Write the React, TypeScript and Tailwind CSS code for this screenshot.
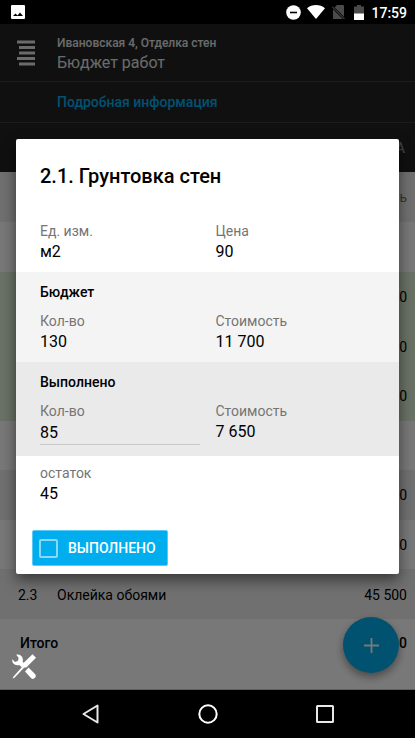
import React from 'react';

type Row = { code?: string; name?: string; total?: string; tone: string };

const rows: Row[] = [
  { tone: 'bg-white' },
  { total: '0', tone: 'bg-[#e1f0d6]' },
  { total: '0', tone: 'bg-[#e1f0d6]' },
  { total: '0', tone: 'bg-[#e1f0d6]' },
  { tone: 'bg-white' },
  { total: '0', tone: 'bg-[#efefef]' },
  { total: '0', tone: 'bg-white' },
  { code: '2.3', name: 'Оклейка обоями', total: '45 500', tone: 'bg-[#efefef]' },
];

const StatusBar = () => (
  <div className="flex h-6 items-center justify-between bg-black pl-[11px] pr-2 text-white">
    <svg className="h-[14px] w-[14px]" viewBox="0 0 14 14">
      <rect width="14" height="14" rx="1" fill="#fff" />
      <path d="M2 11 4.500 8.500 6.500 10.500 9 7.500 12 11Z" fill="#000" />
    </svg>
    <div className="flex items-center">
      <svg className="h-[15px] w-[15px]" viewBox="0 0 15 15">
        <circle cx="7.5" cy="7.5" r="7.3" fill="#fff" />
        <rect x="4" y="6.7" width="7" height="1.6" fill="#000" />
      </svg>
      <svg className="ml-1.5 h-[14px] w-[18px]" viewBox="0 0 18 14">
        <path d="M0 3.2C2.6 1.1 5.7 0 9 0s6.400 1.100 9 3.200L9 14Z" fill="#fff" />
      </svg>
      <svg className="ml-[7px] h-[14px] w-[13px]" viewBox="0 0 13 14">
        <path d="M5 0h6a1 1 0 0 1 1 1v13H1V4Z" fill="#4a4a4a" />
        <path d="M0 1.500 12.500 14" stroke="#000" strokeWidth="2.400" />
        <path d="M0 1.500 12.500 14" stroke="#5c5c5c" strokeWidth="1" />
      </svg>
      <svg className="ml-[9px] h-[15px] w-[10px]" viewBox="0 0 10 15">
        <path d="M3 0h4v1.500h3V15H0V1.500h3Z" fill="#4a4a4a" />
        <rect y="8.500" width="10" height="6.500" fill="#fff" />
      </svg>
      <span className="ml-[7px] pt-px text-sm leading-5 font-medium">17:59</span>
    </div>
  </div>
);

const Field = ({ label, value }: { label: string; value: string }) => (
  <div>
    <div className="text-sm leading-5 text-[#757575]">{label}</div>
    <div className="text-base leading-[22px]">{value}</div>
  </div>
);

const TaskDialog = () => (
  <div
    role="dialog"
    aria-labelledby="task-title"
    className="w-full rounded-xs bg-white text-black shadow-[0_6px_14px_rgba(0,0,0,0.5)]"
  >
    <h2 id="task-title" className="px-6 pt-6 text-xl leading-[26px] font-medium">
      2.1. Грунтовка стен
    </h2>

    <div className="grid grid-cols-2 gap-4 px-6 pt-8 pb-[9px]">
      <Field label="Ед. изм." value="м2" />
      <Field label="Цена" value="90" />
    </div>

    <section className="bg-[#f4f4f4] px-6 pt-[10px] pb-[9px]">
      <h3 className="text-sm leading-5 font-medium">Бюджет</h3>
      <div className="mt-[9px] grid grid-cols-2 gap-4">
        <Field label="Кол-во" value="130" />
        <Field label="Стоимость" value="11 700" />
      </div>
    </section>

    <section className="bg-[#eaeaea] px-6 pt-[10px] pb-[11px]">
      <h3 className="text-sm leading-5 font-medium">Выполнено</h3>
      <div className="mt-[9px] grid grid-cols-2 gap-4">
        <div>
          <label htmlFor="done-qty" className="block text-sm leading-5 text-[#757575]">
            Кол-во
          </label>
          <input
            id="done-qty"
            type="text"
            defaultValue="85"
            className="block h-6 w-full border-b border-[#c8c8c8] bg-transparent pb-px text-base leading-[22px] outline-none"
          />
        </div>
        <Field label="Стоимость" value="7 650" />
      </div>
    </section>

    <div className="grid grid-cols-2 gap-4 px-6 pt-[7px]">
      <Field label="остаток" value="45" />
    </div>

    <div className="flex px-4 pt-[25px] pb-2">
      <label className="inline-flex h-9 items-center rounded-xs border border-[#5cc9f5] bg-[#00aeef] pr-[11px] pl-1.5 text-white">
        <input
          type="checkbox"
          className="h-[19px] w-[19px] appearance-none rounded-xs border-2 border-[#8ad8f8] checked:bg-white"
        />
        <span className="ml-[10px] text-sm leading-5 font-medium">ВЫПОЛНЕНО</span>
      </label>
    </div>
  </div>
);

const App = () => {
  return (
    <div className="flex min-h-screen flex-col bg-black font-[Roboto,sans-serif]">
      <StatusBar />

      <div className="relative flex flex-1 flex-col bg-white">
        <header className="bg-[#222] shadow-md">
          <div className="flex h-[58px] items-center border-b border-[#3c3c3c] pl-[17px]">
            <button type="button" aria-label="Меню">
              <svg className="h-[26px] w-[18px]" viewBox="0 0 18 26" fill="#e4e4e4">
                <rect y="0.500" width="18" height="3" />
                <rect x="2" y="6" width="16" height="3" />
                <rect x="2" y="11.500" width="16" height="3" />
                <rect y="17" width="18" height="3" />
                <rect x="2" y="22.500" width="16" height="3" />
              </svg>
            </button>
            <div className="ml-[22px] pt-1 text-[#e4e4e4]">
              <div className="text-xs leading-4 font-medium">Ивановская 4, Отделка стен</div>
              <h1 className="text-base leading-6">Бюджет работ</h1>
            </div>
          </div>
          <div className="flex h-[41px] items-center border-b border-[#3c3c3c] pl-[57px]">
            <a href="#details" className="text-sm font-medium text-[#00aeef]">
              Подробная информация
            </a>
          </div>
          <div className="flex h-[49px] items-center justify-end pr-[10px]">
            <span className="text-sm font-medium text-[#888]">СМЕТА</span>
          </div>
        </header>

        <table className="w-full flex-1 border-collapse text-sm text-black">
          <thead>
            <tr className="h-[50px] bg-[#efefef]">
              <th />
              <th />
              <th className="pr-2 text-right text-sm font-normal text-[#777]">Стоимость</th>
            </tr>
          </thead>
          <tbody>
            {rows.map((row, i) => (
              <tr key={i} className={`h-[49px] ${row.tone}`}>
                <td className="w-[57px] pt-px pl-[18px]">{row.code}</td>
                <td className="pt-px">{row.name}</td>
                <td className="pt-px pr-2 text-right">{row.total}</td>
              </tr>
            ))}
          </tbody>
        </table>
        <div className="flex h-[71px] justify-between border-b border-[#ccc] pt-[14px] pr-2 pl-5 text-sm leading-5 font-medium">
          <span>Итого</span>
          <span>0</span>
        </div>

        <button
          type="button"
          aria-label="Добавить"
          className="absolute right-4 bottom-[17px] flex h-14 w-14 items-center justify-center rounded-full bg-[#00aeef] shadow-[0_4px_8px_rgba(0,0,0,0.4)]"
        >
          <svg className="h-[15px] w-[15px]" viewBox="0 0 15 15">
            <path d="M7.500 0v15M0 7.500h15" stroke="#fff" strokeWidth="1.800" />
          </svg>
        </button>

        <div className="absolute inset-0 flex items-center bg-black/53 px-4 pb-px">
          <TaskDialog />
        </div>

        <button type="button" aria-label="Инструменты" className="absolute bottom-[11px] left-3">
          <svg className="h-[25px] w-6" viewBox="0 0 24 25" fill="#fff">
            <path d="M4.200.8C7.500 0 10.300 2 10.800 5v3l2 2-3 3.200-2.600-2.200C4.200 11.800 1 10.200.2 7.200V5.300l2.900 2.600 3-1.200.5-3Z" />
            <path d="M16.500 13.500 23 20a2.900 2.900 0 0 1-3.800 4.300L13 17.500Z" />
            <path d="M20.500.2 24 3.700 14.500 13.200 12 13.700 2.500 23.700.7 24.600 1.300 22.700 10.500 12.500l.5-3Z" />
          </svg>
        </button>
      </div>

      <nav className="flex h-12 items-center bg-black px-8">
        <button type="button" aria-label="Назад" className="flex flex-1 justify-center">
          <svg className="h-5 w-[17px]" viewBox="0 0 17 20">
            <path d="M15.500 1.500v17L1.500 10Z" fill="none" stroke="#e8e8e8" strokeWidth="2" strokeLinejoin="round" />
          </svg>
        </button>
        <button type="button" aria-label="Домой" className="flex flex-1 justify-center">
          <svg className="h-5 w-5" viewBox="0 0 20 20">
            <circle cx="10" cy="10" r="8.700" fill="none" stroke="#fff" strokeWidth="2" />
          </svg>
        </button>
        <button type="button" aria-label="Недавние" className="flex flex-1 justify-center">
          <svg className="h-[18px] w-[18px]" viewBox="0 0 18 18">
            <rect x="1" y="1" width="16" height="16" rx="0.500" fill="none" stroke="#e8e8e8" strokeWidth="2" />
          </svg>
        </button>
      </nav>
    </div>
  );
};

export default App;
